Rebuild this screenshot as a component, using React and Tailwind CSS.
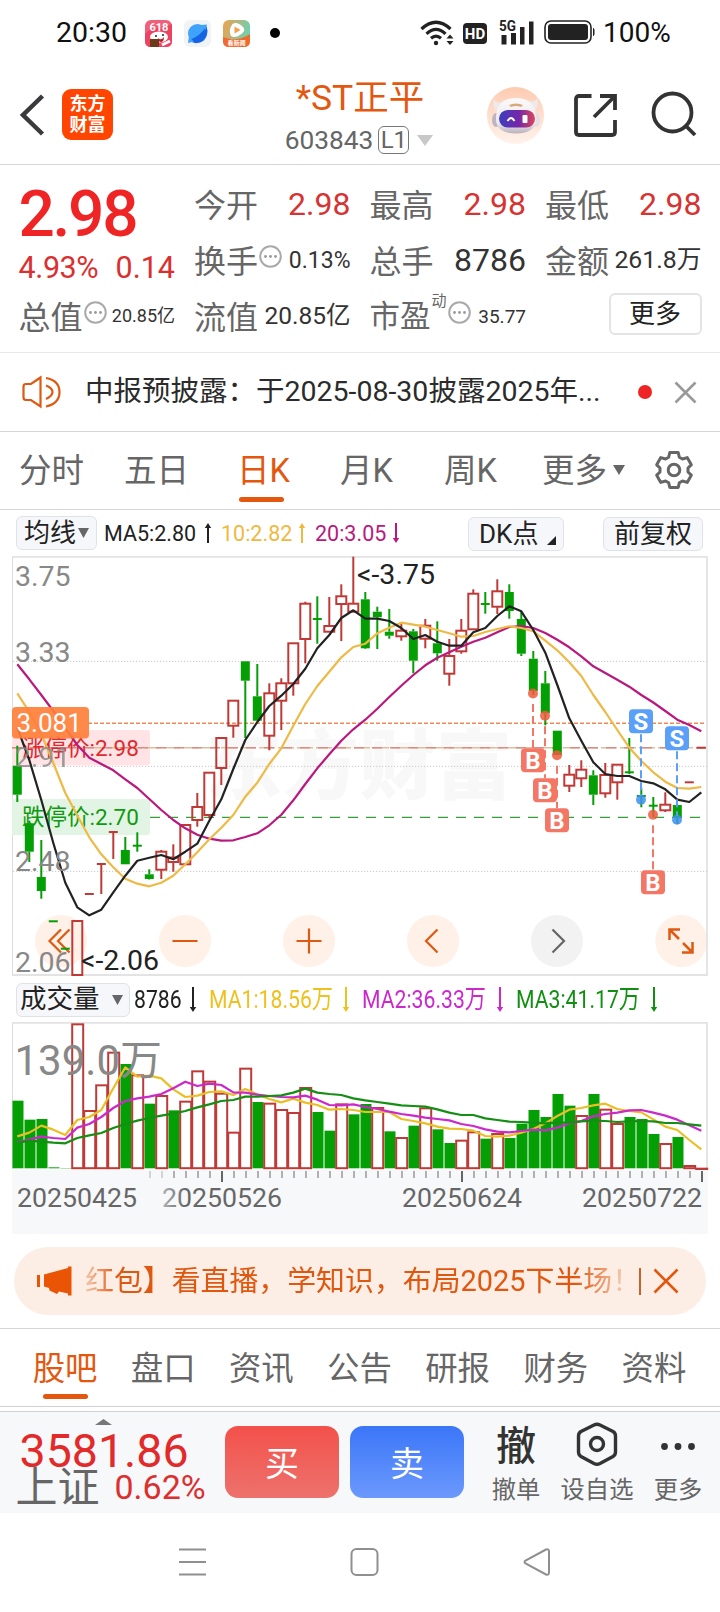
import { clsx } from 'clsx';

// candles, left to right: [up, high, body top, body bottom, low]
const CANDLES = [
  [0, 745.7, 765.7, 794.7, 802], [0, 820.7, 823.3, 851.7, 862], [0, 840, 877, 891, 898.7],
  [0, 921.3, 921.3, 921.3, 921.3], [0, 948.7, 948.7, 948.7, 948.7], [1, 921, 921, 975, 975],
  [1, 894, 894, 894, 894], [1, 864, 864, 864, 894], [1, 832, 832, 832, 859],
  [0, 837, 850, 864.3, 864.3], [0, 832.3, 845.7, 845.7, 851.7], [0, 869.3, 874.3, 879, 879.5],
  [1, 850, 851.7, 869.7, 879], [1, 844.3, 857.5, 862, 871.7], [1, 825, 825, 864.3, 864.3],
  [1, 793, 807, 820, 826.7], [1, 772.7, 772.7, 815, 818.5], [1, 738, 738, 768, 785],
  [1, 700.7, 700.7, 725.7, 737.7], [0, 661.3, 661.3, 680.7, 738], [0, 664, 696.3, 720.7, 720.7],
  [1, 683.3, 693.3, 735.7, 750.3], [1, 678.3, 683.3, 700.7, 730], [1, 643.3, 643.3, 683.3, 695.7],
  [1, 601.7, 603.7, 639, 663.3], [0, 596.3, 619, 619, 643.7], [1, 597, 626, 631.7, 631.7],
  [1, 584.3, 596.3, 604, 641], [1, 556.7, 603.7, 611.7, 611.7], [0, 592, 599.3, 648.3, 649],
  [0, 606.7, 611.7, 617.3, 649], [0, 609, 631.7, 635.7, 638.7], [1, 623.3, 630.7, 636.3, 640.7],
  [0, 629, 631.3, 660.7, 673.3], [1, 619, 625.7, 638.7, 648.3], [0, 621.3, 643.3, 653.3, 660.7],
  [1, 639, 656, 673.7, 685.7], [1, 619, 630.7, 651.3, 653.7], [1, 589.3, 593.7, 629.3, 629.3],
  [0, 592, 604, 604, 613.7], [1, 579.3, 591.3, 606.7, 614], [0, 584.3, 592, 611, 618.7],
  [0, 611.7, 619, 653.7, 656], [0, 651, 658.7, 691, 695], [0, 671, 683.3, 713.3, 725.3],
  [0, 730.7, 730.7, 755, 755], [1, 765, 774.7, 785.7, 792], [1, 760.3, 769.7, 778.3, 787],
  [0, 770.3, 775.3, 794.7, 805], [1, 763, 775, 793.3, 797.7], [1, 764.7, 764.7, 782.3, 799.7],
  [0, 738, 772.3, 772.3, 774], [0, 787.7, 796, 796, 807.3], [0, 797, 805.7, 805.7, 817],
  [1, 792.3, 804.7, 810.3, 812], [0, 805, 805, 817.3, 824], [1, 782.3, 782.3, 782.3, 782.3],
  [1, 747.7, 747.7, 747.7, 747.7],
];

const MA5 = [
  727.7, 760, 800, 843, 882.7, 907.3, 915.3, 909.7, 892.3, 875.7, 860.7, 857.7, 855, 859.3, 851.7,
  843.7, 820.7, 799.3, 769, 740, 722, 706, 695.7, 684, 668.7, 648.3, 635, 618, 610.3, 618.7, 618.7,
  621, 628, 639, 635, 641.7, 645.7, 645.7, 632.3, 628, 616, 606.3, 611.3, 630, 652.7, 685, 718.3,
  740.7, 762.3, 774, 776, 776, 781, 783.3, 789.3, 799.7, 802, 792.3,
];
const MA10 = [
  693.3, 712, 734, 763, 793, 815.5, 837.3, 854.3, 867.3, 878.7, 883.7, 886.3, 882.7, 875.7, 864.3,
  852.3, 839.3, 827.7, 815, 796.7, 782.7, 764, 748.3, 725.7, 704, 686, 671.7, 657.3, 647, 643.7,
  633.3, 627.7, 622.7, 624.7, 626.7, 630, 633.3, 636.7, 636, 632, 629, 626.3, 628, 631.3, 640.7,
  650.3, 662.3, 676, 695, 712, 730, 747.7, 761, 772.3, 781.7, 788, 788.7, 787,
];
const MA20 = [
  664.3, 679.3, 695, 711, 728, 745, 757.7, 764, 770.3, 779.3, 788, 799, 810, 820, 828.3, 834.7,
  838.7, 840.7, 840.3, 837, 833.3, 825.3, 814.7, 800.3, 784, 768.3, 754.3, 740.7, 729.3, 719.7,
  708.7, 697, 685.7, 675, 665.3, 657.7, 652.3, 646.7, 641.7, 637.7, 632.3, 627, 626, 628, 633,
  639.7, 647.3, 656.3, 666.3, 673, 679.7, 686.7, 695, 702.5, 711, 719.7, 725, 731.3,
];

// volume bars: [up, top], a third of a pixel per unit
const VOLUMES = [
  [0, 362], [0, 419], [0, 417], [0, 562], [0, 564], [1, 130], [1, 390], [1, 313], [1, 215], [0, 252],
  [1, 283], [0, 371], [1, 345], [0, 391], [1, 362], [1, 271], [1, 302], [1, 338], [1, 455], [1, 263],
  [0, 366], [1, 368], [1, 387], [1, 396], [1, 321], [0, 396], [0, 452], [1, 370], [0, 403], [0, 372],
  [1, 381], [0, 454], [1, 471], [0, 437], [1, 382], [0, 448], [0, 489], [1, 479], [1, 454], [0, 476],
  [1, 459], [0, 474], [0, 431], [0, 390], [0, 411], [0, 342], [0, 377], [1, 405], [0, 342], [1, 386],
  [1, 429], [0, 411], [0, 417], [0, 462], [1, 489], [0, 471], [1, 555], [1, 563],
];
const VMA1 = [
  469, 458, 437, 449, 465, 420, 411, 390, 325, 262, 290, 287, 295, 328, 351, 347, 336, 334, 345, 327,
  343, 357, 367, 356, 368, 375, 389, 387, 390, 396, 396, 396, 417, 423, 430, 440, 446, 447, 452, 468,
  470, 467, 458, 447, 430, 408, 389, 384, 376, 371, 387, 393, 397, 418, 440, 450, 480, 508,
];
const VMA2 = [
  488, 479, 470, 474, 477, 443, 432, 411, 384, 363, 355, 350, 342, 325, 305, 318, 311, 315, 337, 338,
  344, 348, 351, 352, 347, 359, 375, 376, 373, 381, 387, 395, 402, 407, 413, 417, 421, 432, 438, 448,
  455, 457, 453, 449, 451, 443, 430, 423, 409, 402, 398, 391, 390, 398, 407, 419, 436, 452,
];
const VMA3 = [
  489, 482, 485, 488, 490, 474, 466, 459, 444, 432, 422, 414, 407, 401, 393, 382, 373, 363, 360, 350,
  350, 348, 346, 338, 326, 338, 342, 345, 355, 361, 366, 371, 376, 378, 380, 388, 398, 405, 405, 415,
  420, 425, 426, 428, 430, 428, 428, 424, 422, 423, 426, 424, 423, 424, 429, 429, 433, 437,
];

const candleX = (i) => 17.3 + i * 12;
const volumeY = (v) => 980 + v / 3;
const toPoints = (values, y = (v) => v) =>
  values.map((v, i) => `${candleX(i)},${y(v)}`).join(' ');

const RED = '#bf3a37';
const GREEN = '#049f04';
const ORANGE = '#dd5a12';

function StatusBar() {
  return (
    <div className="h-[66px] flex items-center text-[#111]">
      <span className="w-[75px] ml-[56px] text-[28.5px] leading-none">20:30</span>
      <svg className="ml-[14px]" width="27" height="27" viewBox="0 0 27 27">
        <rect width="27" height="27" rx="6" fill="#f0607a" />
        <path d="M0 14 Q8 5 17 9 L27 4 V21 Q27 27 21 27 H6 Q0 27 0 21Z" fill="#ee4262" />
        <text x="4.500" y="11" fontSize="11" fontWeight="700" fill="#fff">618</text>
        <ellipse cx="14" cy="17" rx="9" ry="5.500" fill="#fff" />
        <circle cx="11" cy="16" r="1" fill="#222" />
        <circle cx="18" cy="15" r="1" fill="#222" />
        <path d="M13 18 q3 3 6 -1 q0 5 -3 5 q-3 0 -3 -4" fill="#b3202c" />
        <rect x="5" y="19" width="9" height="8" rx="1" fill="#6b3a1b" />
        <path d="M17 25 l8 -4" stroke="#fff" strokeWidth="3" />
      </svg>
      <svg className="ml-[12px]" width="27" height="27" viewBox="0 0 27 27">
        <rect width="27" height="27" rx="6" fill="#f2f3f5" />
        <circle cx="13.500" cy="13.500" r="9.500" fill="#3fa2fb" />
        <path d="M4.500 20 Q16 17 22.500 6 Q26 16 17 22 Q10 25 4.500 20Z" fill="#1763e6" />
        <path d="M17 5 L23 4.500 L21.500 10Z" fill="#3fa2fb" />
        <path d="M5 17 L4 23 L10 21.500Z" fill="#3fa2fb" />
      </svg>
      <svg className="ml-[12px]" width="27" height="27" viewBox="0 0 27 27">
        <defs>
          <linearGradient id="video" x1="0" y1="0" x2="1" y2="0.300">
            <stop offset="0" stopColor="#f3a04b" />
            <stop offset="1" stopColor="#6fd0ae" />
          </linearGradient>
        </defs>
        <rect width="27" height="27" rx="6" fill="url(#video)" />
        <path d="M0 17 Q14 23 27 14 V21 Q27 27 21 27 H6 Q0 27 0 21Z" fill="#f2692d" />
        <path d="M9.500 4 Q14 1 20 7 Q23 10 19 13.500 Q12 19 8 16 Q5 10 9.500 4Z" fill="#fff" />
        <path d="M11.500 6.500 L17.500 10 L11.500 13.500Z" fill="#f3a04b" />
        <text x="4.500" y="25" fontSize="6" fontWeight="700" fill="#fff">看新闻</text>
      </svg>
      <div className="ml-[20px] size-[10px] rounded-full bg-black" />
      <svg className="ml-[140px]" width="34" height="27" viewBox="0 0 34 27" fill="none" stroke="#222">
        <path d="M1.500 9 Q16 -4.500 30.500 9" strokeWidth="3.200" />
        <path d="M6.500 13.800 Q16 5 25.500 13.800" strokeWidth="3.200" />
        <path d="M11 18.300 Q16 14 21 18.300" strokeWidth="3.200" />
        <circle cx="16" cy="23" r="2.200" fill="#222" stroke="none" />
        <path d="M26.500 18.500 L30 14.500 L33.500 18.500Z M26.500 21 L30 25 L33.500 21Z" fill="#222" stroke="none" />
      </svg>
      <div className="ml-[9px] w-[24px] h-[21px] rounded-[4px] bg-[#222] text-white text-[15px] font-bold leading-[22px] text-center">
        HD
      </div>
      <svg className="ml-[12px] overflow-visible" width="36" height="27" viewBox="0 0 36 27" fill="#222">
        <text x="0" y="11" fontSize="14" fontWeight="700" textLength="17" lengthAdjust="spacingAndGlyphs">5G</text>
        <rect x="2.500" y="15" width="5" height="9.500" />
        <rect x="12" y="13" width="5" height="11.500" />
        <rect x="21" y="7" width="4.500" height="17.500" />
        <rect x="30" y="1.500" width="4.500" height="23" />
      </svg>
      <svg className="ml-[9px] mt-[-2px]" width="51" height="24" viewBox="0 0 51 24">
        <rect x="1" y="1" width="46" height="22" rx="6" fill="none" stroke="#222" strokeWidth="1.600" />
        <rect x="4" y="4" width="40" height="16" rx="3" fill="#222" />
        <path d="M49 8 q1.500 0 1.500 2 v4 q0 2 -1.500 2Z" fill="#222" />
      </svg>
      <span className="ml-[8px] text-[28px] leading-none">100%</span>
    </div>
  );
}

function Header() {
  return (
    <header className="relative h-[99px] flex items-center border-b border-[#d6d6d6]">
      <svg className="ml-[19px]" width="27" height="44" viewBox="0 0 27 44" fill="none" stroke="#3a3a3c" strokeWidth="4.500">
        <path d="M23.500 3 L4 22 L23.500 41" />
      </svg>
      <div className="ml-[16px] mt-[-1px] size-[51px] rounded-[9px] bg-[#ff4500] text-white font-bold text-[18px] leading-[21px] pt-[4px] text-center">
        <div>东方</div>
        <div>财富</div>
      </div>
      <div className="absolute inset-x-0 top-[12px] flex flex-col items-center">
        <h1 className="text-[35.5px] leading-[40px] text-[#e4570f]">*ST正平</h1>
        <div className="flex items-center mt-[8px] ml-[-2px] text-[26.3px] leading-[28px] text-[#666]">
          603843
          <span className="ml-[5px] w-[31px] h-[28px] border-[1.5px] border-[#777] rounded-[6px] text-[24px] leading-[26px] text-center">
            L1
          </span>
          <svg className="ml-[8px]" width="16" height="11"><path d="M0 0 H16 L8 11Z" fill="#c8c8c8" /></svg>
        </div>
      </div>
      <svg className="ml-[374px]" width="57" height="57" viewBox="0 0 57 57">
        <defs>
          <linearGradient id="halo" x1="0" y1="0" x2="0" y2="1">
            <stop offset="0" stopColor="#fdcbb0" />
            <stop offset="1" stopColor="#fff3ec" />
          </linearGradient>
          <linearGradient id="robot" x1="0" y1="0" x2="0" y2="1">
            <stop offset="0" stopColor="#fbf9fa" />
            <stop offset="0.700" stopColor="#eeeaee" />
            <stop offset="1" stopColor="#b9b0bd" />
          </linearGradient>
          <linearGradient id="visor" x1="0" y1="0" x2="1" y2="0">
            <stop offset="0" stopColor="#3b3fc0" />
            <stop offset="0.550" stopColor="#7427a8" />
            <stop offset="1" stopColor="#e0455c" />
          </linearGradient>
        </defs>
        <circle cx="28.500" cy="28.500" r="28.500" fill="url(#halo)" />
        <path d="M7 12 Q9 17 16 15 L12 25 Q4 21 7 12Z M50 11 Q48 16 41 14 L46 25 Q53 20 50 11Z" fill="#eee9ea" />
        <ellipse cx="9" cy="33" rx="4" ry="7" fill="#bdb6c2" />
        <ellipse cx="49" cy="33" rx="4" ry="7" fill="#e4dfe4" />
        <path d="M9 32 Q9 11 29 11 Q49 11 49 32 Q49 46 29 46.500 Q9 46 9 32Z" fill="url(#robot)" />
        <path d="M22 18 Q29 15 36 18 L34 20 Q29 18 24 20Z" fill="#d9a878" />
        <rect x="12" y="23" width="36" height="17.500" rx="8.700" fill="url(#visor)" />
        <path d="M20.500 34 Q24 28 27.500 34" fill="none" stroke="#fff" strokeWidth="2" />
        <rect x="35.500" y="28" width="5" height="8" rx="1" fill="#fff" />
      </svg>
      <svg className="ml-[29px] mt-[-1px]" width="46" height="46" viewBox="0 0 46 46" fill="none" stroke="#333" strokeWidth="3.800">
        <path d="M18.500 4 H6 Q3 4 3 7 V40 Q3 43 6 43 H39 Q42 43 42 40 V28" />
        <path d="M27 4 H42 V18" />
        <path d="M41 5 L21 25" />
      </svg>
      <svg className="ml-[32px] mt-[-2px]" width="46" height="46" viewBox="0 0 46 46" fill="none" stroke="#333" strokeWidth="3.800">
        <circle cx="21.500" cy="21.500" r="19" />
        <path d="M34.500 34.500 L44 44" />
      </svg>
    </header>
  );
}

function InfoDot() {
  return (
    <svg width="23" height="23" viewBox="0 0 23 23" className="shrink-0">
      <circle cx="11.500" cy="11.500" r="10.300" fill="none" stroke="#aaa" strokeWidth="2" />
      <circle cx="6.500" cy="11.500" r="1.400" fill="#999" />
      <circle cx="11.500" cy="11.500" r="1.400" fill="#999" />
      <circle cx="16.500" cy="11.500" r="1.400" fill="#999" />
    </svg>
  );
}

function Quote({ label, info, sup, children, className }) {
  return (
    <div className="h-[56px] flex items-center whitespace-nowrap">
      <span className={clsx('pt-[3px] leading-none text-[#666]', sup ? 'text-[30.5px]' : 'text-[32px]')}>{label}</span>
      {sup && <span className="text-[15px] leading-none text-[#666] mt-[-30px] ml-px">{sup}</span>}
      {info && <span className="mt-[-7px] ml-px"><InfoDot /></span>}
      <span className={clsx('ml-auto leading-none', className)}>{children}</span>
    </div>
  );
}

function QuotePanel() {
  return (
    <section className="h-[188px] pt-[11px] px-[18.5px] grid grid-cols-4 gap-x-[19px] border-b border-[#e8e8e8]">
      <div>
        <div className="h-[73px] pt-[5px] flex items-center text-[64px] leading-none font-medium text-[#ef2525] tracking-[-2.3px]">2.98</div>
        <div className="h-[39px] flex items-center justify-between text-[30.5px] leading-none text-[#dc2f2f]">
          <span className="tracking-[-0.4px]">4.93%</span>
          <span>0.14</span>
        </div>
        <Quote label="总值" info className="text-[18px] text-[#333]">20.85亿</Quote>
      </div>
      <div>
        <Quote label="今开" className="text-[32px] text-[#d63333]">2.98</Quote>
        <Quote label="换手" info className="text-[23px] text-[#333]">0.13%</Quote>
        <Quote label="流值" className="text-[24.5px] text-[#333]">20.85亿</Quote>
      </div>
      <div>
        <Quote label="最高" className="text-[32px] text-[#d63333]">2.98</Quote>
        <Quote label="总手" className="text-[32px] text-[#333]">8786</Quote>
        <Quote label="市盈" sup="动" info className="text-[19px] text-[#333]">35.77</Quote>
      </div>
      <div>
        <Quote label="最低" className="text-[32px] text-[#d63333]">2.98</Quote>
        <Quote label="金额" className="text-[24.8px] text-[#333]">261.8万</Quote>
        <div className="h-[56px] flex items-center justify-end">
          <button className="w-[93px] h-[42px] mt-[-4px] border-2 border-[#e4e4e4] rounded-[6px] text-[26px] leading-[39px] text-[#222]">
            更多
          </button>
        </div>
      </div>
    </section>
  );
}

function Notice() {
  return (
    <section className="h-[79px] flex items-center border-b border-[#d6d6d6]">
      <svg className="ml-[21px]" width="40" height="34" viewBox="0 0 40 34" fill="none" stroke={ORANGE} strokeWidth="2.200">
        <path d="M19.500 2.500 L10 9 H5 Q2.500 9 2.500 11.500 V22.500 Q2.500 25 5 25 H10 L19.500 31.500Z" />
        <path d="M25 10.500 Q31.500 13 31.500 17 Q31.500 21 25 24" />
        <path d="M25 3 Q38.500 5.500 38.500 17 Q38.500 28.500 25 31.500" />
      </svg>
      <p className="ml-[24px] w-[520px] text-[28.5px] leading-none text-[#2b2b2b] whitespace-nowrap">
        中报预披露：于2025-08-30披露2025年...
      </p>
      <span className="ml-[33px] size-[14px] rounded-full bg-[#ef2424]" />
      <svg className="ml-[22px]" width="23" height="23" stroke="#999" strokeWidth="2.600">
        <path d="M1.500 1.500 L21.500 21.500 M21.500 1.500 L1.500 21.500" />
      </svg>
    </section>
  );
}

function PeriodTabs() {
  return (
    <nav className="h-[78px] pt-[2px] flex items-center border-b border-[#d6d6d6] pl-[19px] text-[32.5px] leading-none text-[#666] whitespace-nowrap">
      <span className="w-[105px]">分时</span>
      <span className="w-[113px]">五日</span>
      <span className="relative w-[103px] text-[#e4570f]">
        日K
        <i className="absolute left-[2px] top-[42px] w-[45px] h-[5px] rounded-full bg-[#e4570f]" />
      </span>
      <span className="w-[104px]">月K</span>
      <span className="w-[98px]">周K</span>
      <span>更多</span>
      <svg className="ml-[6px] mt-[-3px]" width="12" height="10"><path d="M0 0 H12 L6 10Z" fill="#666" /></svg>
      <svg className="ml-[29px] mt-[-3px]" width="40" height="40" viewBox="0 0 40 40" fill="none" stroke="#666" strokeWidth="3">
        <path
          strokeLinejoin="round"
          d="M15.800 2.500 H24.200 L25.300 7.200 L28.500 9 L33.200 7.600 L37.300 14.800 L34 18 V22 L37.300 25.200 L33.200 32.400 L28.500 31 L25.300 32.800 L24.200 37.500 H15.800 L14.700 32.800 L11.500 31 L6.800 32.400 L2.700 25.200 L6 22 V18 L2.700 14.800 L6.800 7.600 L11.500 9 L14.700 7.200 Z"
        />
        <circle cx="20" cy="20" r="5.800" />
      </svg>
    </nav>
  );
}

function Arrow({ up, color, size = 20, className }) {
  return (
    <svg className={clsx('shrink-0', className)} width="8" height={size} fill={color}>
      {up ? (
        <path d={`M4 0 L7.200 5 H5 V${size} H3 V5 H0.800Z`} />
      ) : (
        <path d={`M4 ${size} L7.200 ${size - 5} H5 V0 H3 V${size - 5} H0.800Z`} />
      )}
    </svg>
  );
}

function IndicatorBar() {
  const chip = 'h-[34px] border-[1.5px] border-[#dfe3e8] rounded-[6px] bg-[#f6f7fa] text-[26px] leading-[32px] text-[#222] flex items-center';
  return (
    <div className="h-[46px] flex items-center whitespace-nowrap text-[21.5px] leading-none">
      <div className={clsx(chip, 'ml-[16px] w-[81px] pl-[7px]')}>
        均线
        <svg className="ml-[2px]" width="11" height="10"><path d="M0 0 H11 L5.500 10Z" fill="#666" /></svg>
      </div>
      <span className="ml-[7px] mt-[2px] w-[99px] text-[#222]">MA5:2.80</span>
      <Arrow up color="#222" className="ml-[1px]" />
      <span className="ml-[9px] mt-[2px] w-[75px] text-[#efb93f]">10:2.82</span>
      <Arrow up color="#efb93f" className="ml-[2px]" />
      <span className="ml-[9px] mt-[2px] w-[75px] text-[#b9197f]">20:3.05</span>
      <Arrow color="#b9197f" className="ml-[2px] mr-[68px]" />
      <div className={clsx(chip, 'mt-[2px] w-[96px] pl-[10px]')}>
        DK点
        <svg className="ml-[9px] mt-[13px]" width="9" height="9"><path d="M9 0 V9 H0Z" fill="#222" /></svg>
      </div>
      <div className={clsx(chip, 'mt-[2px] ml-[39px] w-[100px] justify-center')}>前复权</div>
    </div>
  );
}

function Candle({ i, data }) {
  const [up, high, top, bottom, low] = data;
  const x = candleX(i);
  const color = up ? RED : GREEN;
  if (bottom - top < 1) {
    return (
      <g stroke={color} strokeWidth="2">
        <path d={`M${x - 4.500} ${top} H${x + 4.500}`} />
        {low > high && <path d={`M${x} ${high} V${low}`} />}
      </g>
    );
  }
  return (
    <g stroke={color} strokeWidth="2">
      {high < top && <path d={`M${x} ${high} V${top}`} />}
      {low > bottom && <path d={`M${x} ${bottom} V${low}`} />}
      {up ? (
        <rect x={x - 5} y={top} width="10" height={bottom - top} fill="none" />
      ) : (
        <rect x={x - 4.500} y={top} width="9" height={bottom - top} fill={GREEN} stroke="none" />
      )}
    </g>
  );
}

function Marker({ x, y, dot, type }) {
  const buy = type === 'B';
  const color = buy ? '#f47766' : '#5a9ff8';
  const from = buy ? dot + 10.5 : y + 13;
  const to = buy ? y - 12 : dot - 4;
  return (
    <g>
      <circle cx={x} cy={dot} r="5" fill={buy ? '#ee5a3c' : '#3d8ff0'} opacity="0.85" />
      <path d={`M${x} ${from} V${to}`} stroke={color} strokeWidth="2" strokeDasharray="8 4" />
      <rect x={x - 12} y={y - 12} width="24" height="24" rx="4" fill={color} />
      <text x={x} y={y + 8.5} fontSize="24" fontWeight="700" fill="#fff" textAnchor="middle">{type}</text>
    </g>
  );
}

function PriceChart() {
  return (
    <svg className="block" width="720" height="421" viewBox="0 556 720 421" fill="none">
      <text x="206" y="793" fontSize="76" fontWeight="900" fill="#f8f8f8" textLength="306">东方财富</text>
      <path d="M12.500 556 V976" stroke="#dcdcdc" />
      <path d="M12 556.900 H707 V975 H12" stroke="#e3e3e3" strokeWidth="1.800" />
      <path d="M13 661.400 H707 M13 766.400 H707 M13 871.400 H707" stroke="#c9c9c9" strokeDasharray="1.200 1.800" />

      <g fill="#fff0e8">
        <circle cx="61" cy="941" r="26" />
        <circle cx="185" cy="941" r="26" />
        <circle cx="309" cy="941" r="26" />
        <circle cx="433" cy="941" r="26" />
        <circle cx="557" cy="941" r="26" fill="#f2f2f2" />
        <path d="M706 933 A26 26 0 1 0 706 949Z" />
      </g>
      <g stroke={ORANGE} strokeWidth="2.200">
        <path d="M61 929.500 L49.500 941 L61 952.500 M69.500 929.500 L58 941 L69.500 952.500" />
        <path d="M172.500 941 H197.500 M296.500 941 H321.500 M309 928.500 V953.500" />
        <path d="M437.500 929.500 L426 941 L437.500 952.500" />
        <path d="M552.500 929.500 L564 941 L552.500 952.500" stroke="#666" />
        <path d="M669.500 940 V929.500 H680 M670 930 L679 939 M692.500 942 V952.500 H682 M692 952 L683 943" strokeWidth="2.500" />
      </g>

      <path d="M12 730 H147 Q150 730 150 733 V762 Q150 765.500 147 765.500 H12Z" fill="#ffe3e5" />
      <path d="M12 799 H147 Q150 799 150 802 V832 Q150 835 147 835 H12Z" fill="#e2f4e3" />
      <path d="M88 723.200 H706" stroke="#ee8a55" strokeWidth="1.500" strokeDasharray="4 2" />
      <path d="M12 747.700 H706" stroke="#dcc09b" strokeWidth="1.500" strokeDasharray="16 3" />
      <path d="M12 747.700 H706" stroke="#d98d84" strokeWidth="1.500" strokeDasharray="10 8" />
      <path d="M150 817.400 H701" stroke="#35a035" strokeWidth="1.400" strokeDasharray="10 8" />

      {CANDLES.map((c, i) => <Candle key={i} i={i} data={c} />)}
      <text x="22" y="755.500" fontSize="22.500" fill="#e0292f">涨停价:2.98</text>
      <text x="22" y="824.700" fontSize="22.500" fill="#109a10">跌停价:2.70</text>

      <g strokeWidth="2.200" strokeLinejoin="round">
        <polyline points={toPoints(MA20)} stroke="#b9197f" />
        <polyline points={toPoints(MA10)} stroke="#efb945" />
        <polyline points={toPoints(MA5)} stroke="#222" />
      </g>

      <g fontSize="28.500" fill="#888">
        <text x="15" y="586">3.75</text>
        <text x="15" y="662">3.33</text>
        <text x="15" y="767" opacity="0.8">2.91</text>
        <text x="15" y="871">2.48</text>
        <text x="15" y="971.500">2.06</text>
      </g>
      <g fontSize="28.500" fill="#222">
        <text x="357" y="584">&lt;-3.75</text>
        <text x="81" y="969.500">&lt;-2.06</text>
      </g>
      <rect x="12" y="707" width="77" height="31.500" rx="4" fill="#ff7f3a" opacity="0.92" />
      <text x="16.500" y="731.500" fontSize="26" fill="#fff">3.081</text>

      <Marker x={533} y={760.3} dot={693.5} type="B" />
      <Marker x={545} y={790.3} dot={715.7} type="B" />
      <Marker x={557} y={820.3} dot={755.3} type="B" />
      <Marker x={653} y={882.3} dot={814.7} type="B" />
      <Marker x={641} y={721.3} dot={799.7} type="S" />
      <Marker x={677} y={738.3} dot={819.7} type="S" />
    </svg>
  );
}

function Stretch({ width, scaled, className, children }) {
  return (
    <span className={clsx('shrink-0', width, className)}>
      <span className={clsx('inline-block origin-left', scaled)}>{children}</span>
    </span>
  );
}

function VolumeBar() {
  return (
    <div className="h-[45px] flex items-center whitespace-nowrap text-[26.5px] leading-none">
      <div className="ml-[16px] w-[114px] h-[34px] border-[1.5px] border-[#dfe3e8] rounded-[6px] bg-[#f6f7fa] pl-[3px] text-[26.5px] text-[#222] flex items-center">
        成交量
        <svg className="ml-[12px]" width="11" height="10"><path d="M0 0 H11 L5.500 10Z" fill="#666" /></svg>
      </div>
      <Stretch width="w-[54px]" scaled="scale-x-80" className="ml-[4px] text-[#222]">8786</Stretch>
      <Arrow color="#222" size={25} className="ml-[1px]" />
      <Stretch width="w-[128px]" scaled="scale-x-80" className="ml-[12px] text-[#efc11f]">MA1:18.56万</Stretch>
      <Arrow color="#efc11f" size={25} className="ml-[5px]" />
      <Stretch width="w-[128px]" scaled="scale-x-80" className="ml-[12px] text-[#cc29cc]">MA2:36.33万</Stretch>
      <Arrow color="#cc29cc" size={25} className="ml-[6px]" />
      <Stretch width="w-[128px]" scaled="scale-x-80" className="ml-[12px] text-[#118f11]">MA3:41.17万</Stretch>
      <Arrow color="#118f11" size={25} className="ml-[6px]" />
    </div>
  );
}

function VolumeChart() {
  const ticks = Array.from({ length: 47 }, (_, i) => 150 + i * 12);
  return (
    <svg className="block" width="720" height="213" viewBox="0 1022 720 213" fill="none">
      <defs>
        <linearGradient id="fade" gradientUnits="userSpaceOnUse" x1="158" y1="0" x2="186" y2="0">
          <stop offset="0" stopColor="#666" stopOpacity="0.4" />
          <stop offset="1" stopColor="#666" />
        </linearGradient>
      </defs>
      <path d="M12.500 1022 V1169" stroke="#dcdcdc" />
      <path d="M12 1022.900 H707 V1169" stroke="#e3e3e3" strokeWidth="1.800" />
      {VOLUMES.map(([up, v], i) => {
        const x = candleX(i) + 0.2;
        const y = volumeY(v);
        return up ? (
          <rect key={i} x={x - 5.3} y={y + 1} width="11" height={Math.max(1168 - y - 0.8, 0.5)} fill="#fff" stroke={RED} strokeWidth="2" />
        ) : (
          <rect key={i} x={x - 5} y={y} width="11" height={1168.3 - y} fill={GREEN} />
        );
      })}
      <g strokeWidth="2.200" strokeLinejoin="round">
        <polyline points={toPoints(VMA1, volumeY)} stroke="#eabf25" />
        <polyline points={toPoints(VMA2, volumeY)} stroke="#cc29cc" />
        <polyline points={toPoints(VMA3, volumeY)} stroke="#148f14" />
      </g>
      <text x="14.500" y="1075" fontSize="42" fill="#888">139.0万</text>

      <rect x="12" y="1170" width="696" height="64" fill="#f7f8fa" />
      {ticks.map((x, i) => {
        const major = x === 222 || x === 462 || x === 702;
        return (
          <path
            key={x}
            d={`M${x} 1171 V${major ? 1182 : 1178}`}
            stroke={major ? '#666' : '#999'}
            strokeWidth={major ? 2 : 1.5}
            opacity={i < 2 ? 0.5 : 1}
          />
        );
      })}
      <g fontSize="26.700" fill="#666">
        <text x="17" y="1207.300">20250425</text>
        <text x="162" y="1207.300" fill="url(#fade)">20250526</text>
        <text x="402" y="1207.300">20250624</text>
        <text x="582" y="1207.300">20250722</text>
      </g>
    </svg>
  );
}

function Banner() {
  return (
    <section className="h-[94px] pt-[12px] px-[14px] border-b border-[#d6d6d6]">
      <div className="h-[68px] rounded-full bg-[#fceee5] flex items-center text-[#e0570f]">
        <svg className="ml-[23px]" width="35" height="30" viewBox="0 0 35 30" fill="#e95504">
          <path d="M0 9 H3 V21 H0Z M7 8.500 L31 2 V0.500 H34.500 V29.500 H31 V27.500 L22 25.500 L20 28 L12.500 24.500 L12 22 L7 20.500Z" />
        </svg>
        <p className="ml-[13px] w-[553px] overflow-hidden whitespace-nowrap text-[28.9px] leading-[40px] [mask-image:linear-gradient(90deg,rgba(0,0,0,0.25),#000_32px,#000_490px,rgba(0,0,0,0.3)_535px)]">
          红包】看直播，学知识，布局2025下半场！
        </p>
        <span className="ml-[1px] w-[1.5px] h-[27px] bg-[#c8622c]" />
        <svg className="ml-[12px]" width="26" height="26" stroke="#e0570f" strokeWidth="2.600">
          <path d="M1.500 1.500 L24.500 24.500 M24.500 1.500 L1.500 24.500" />
        </svg>
      </div>
    </section>
  );
}

function SectionTabs() {
  const tabs = ['股吧', '盘口', '资讯', '公告', '研报', '财务', '资料'];
  return (
    <nav className="h-[78px] pt-[4px] pl-[16px] pr-[17px] grid grid-cols-7 items-center border-b border-[#d0d0d0] text-[32.4px] leading-none text-[#666] text-center">
      {tabs.map((tab, i) => (
        <span key={tab} className={clsx('relative', i === 0 && 'text-[#e4570f]')}>
          {tab}
          {i === 0 && <i className="absolute left-[27px] top-[41px] w-[45px] h-[5px] rounded-full bg-[#e4570f]" />}
        </span>
      ))}
    </nav>
  );
}

function TradeBar() {
  return (
    <footer className="mt-[4px] h-[102px] flex border-t border-[#d0d0d0] bg-[#f7f8fa] whitespace-nowrap">
      <div className="relative w-[225px] pt-[17px] pl-[19.5px]">
        <svg className="absolute left-[95px] top-[7px]" width="17" height="6"><path d="M0 6 L8.500 0 L17 6Z" fill="#777" /></svg>
        <div className="text-[46.5px] leading-[44px] text-[#e32a2a]">3581.86</div>
        <div className="flex ml-[-4px] mt-[-7px] leading-[44px]">
          <span className="text-[42px] text-[#666]">上证</span>
          <span className="ml-[15px] text-[34px] leading-[42px] text-[#dc2f2f]">0.62%</span>
        </div>
      </div>
      <button className="mt-[14px] w-[114px] h-[72px] rounded-[13px] bg-linear-to-b from-[#f3504a] to-[#ed716c] text-white text-[34px] pt-[4px]">买</button>
      <button className="ml-[11px] mt-[14px] w-[114px] h-[72px] rounded-[13px] bg-linear-to-b from-[#3b76f8] to-[#6b98fc] text-white text-[34px] pt-[4px]">卖</button>
      <div className="ml-[17px] w-[70px] pt-[10px] flex flex-col items-center text-[24.3px] leading-none text-[#666]">
        <span className="h-[56px] text-[40px] leading-[50px] font-medium text-[#333]">撤</span>
        撤单
      </div>
      <div className="ml-[6px] w-[80px] pt-[10px] flex flex-col items-center text-[24.3px] leading-none text-[#666]">
        <span className="h-[56px]">
          <svg width="42" height="46" viewBox="0 0 42 46" fill="none" stroke="#333" strokeWidth="3.400">
            <path d="M18 3 Q21 1.500 24 3 L37 9.500 Q39.500 11 39.500 14 V30 Q39.500 33 37 34.500 L24 41.500 Q21 43 18 41.500 L5 34.500 Q2.500 33 2.500 30 V14 Q2.500 11 5 9.500Z" />
            <circle cx="21" cy="22" r="6.500" />
          </svg>
        </span>
        设自选
      </div>
      <div className="ml-[7px] w-[68px] pt-[10px] flex flex-col items-center text-[24.3px] leading-none text-[#666]">
        <span className="h-[56px]">
          <svg width="36" height="46" fill="#333">
            <circle cx="4.500" cy="24.500" r="3.400" />
            <circle cx="18" cy="24.500" r="3.400" />
            <circle cx="31.500" cy="24.500" r="3.400" />
          </svg>
        </span>
        更多
      </div>
    </footer>
  );
}

function SystemNav() {
  return (
    <div className="h-[98px] flex items-center pl-[178px]">
      <svg width="29" height="28" stroke="#8f8f8f" strokeWidth="2.200"><path d="M1 1.500 H28 M1 14 H28 M1 26.500 H28" /></svg>
      <svg className="ml-[143px]" width="29" height="28" fill="none" stroke="#8f8f8f" strokeWidth="2">
        <rect x="1.500" y="1" width="26" height="26" rx="5" />
      </svg>
      <svg className="ml-[143px]" width="29" height="28" fill="none" stroke="#8f8f8f" strokeWidth="2">
        <path d="M24 1.500 Q27 0.500 27 3.500 V24.500 Q27 27.500 24 26.500 L3.500 15.500 Q1.500 14 3.500 12.500Z" />
      </svg>
    </div>
  );
}

export default function App() {
  return (
    <div className="w-[720px] h-[1612px] overflow-hidden bg-white font-[Roboto,'Noto_Sans_CJK_SC',sans-serif]">
      <StatusBar />
      <Header />
      <QuotePanel />
      <Notice />
      <PeriodTabs />
      <IndicatorBar />
      <PriceChart />
      <VolumeBar />
      <VolumeChart />
      <Banner />
      <SectionTabs />
      <TradeBar />
      <SystemNav />
    </div>
  );
}
